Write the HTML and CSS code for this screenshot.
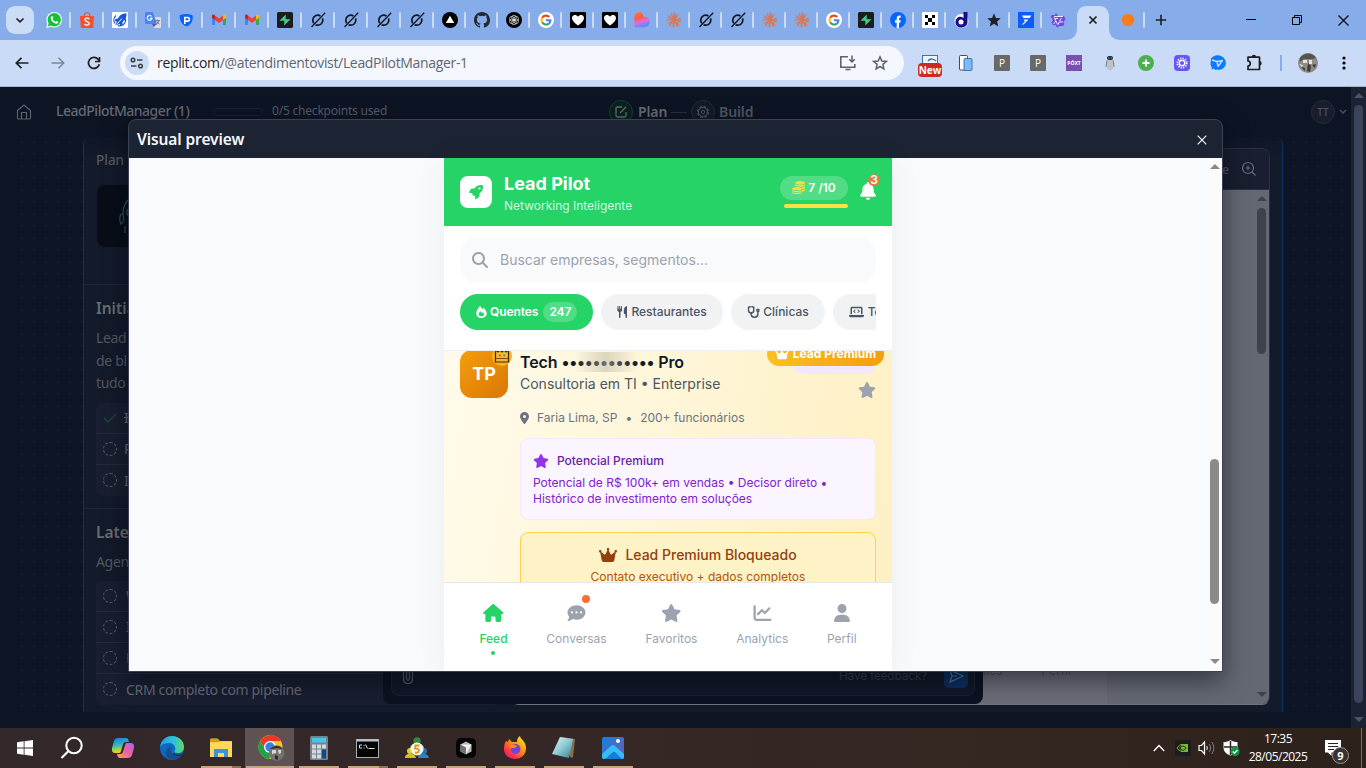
FILE: index.html
```
<!DOCTYPE html>
<html lang="pt-BR">
<head>
<meta charset="utf-8">
<title>LeadPilotManager</title>
<link rel="stylesheet" href="styles.css">
</head>
<body>
<svg class="defs" width="0" height="0" aria-hidden="true">
  <defs>
    <linearGradient id="gLove" x1="0" y1="0" x2="0.3" y2="1"><stop offset="0" stop-color="#ff7a18"/><stop offset=".45" stop-color="#ff5a4d"/><stop offset=".7" stop-color="#e46ad8"/><stop offset="1" stop-color="#5b8dff"/></linearGradient>
    <linearGradient id="gCop" x1="0" y1="0" x2="0.2" y2="1"><stop offset="0" stop-color="#1a7fe0"/><stop offset=".5" stop-color="#2bb5c9"/><stop offset=".75" stop-color="#8fd14a"/><stop offset="1" stop-color="#f7d21e"/></linearGradient>
    <linearGradient id="gCop2" x1="1" y1="0" x2="0" y2="1"><stop offset="0" stop-color="#a866ee"/><stop offset=".5" stop-color="#ee5fa0"/><stop offset="1" stop-color="#ffa24c"/></linearGradient>
    <linearGradient id="gEdge" x1="0" y1="0" x2="1" y2="0"><stop offset="0" stop-color="#1d9fe8"/><stop offset=".6" stop-color="#2fc3d8"/><stop offset="1" stop-color="#5fdc5a"/></linearGradient>
    <linearGradient id="gFire" x1="1" y1="0" x2="0.2" y2="1"><stop offset="0" stop-color="#fff04a"/><stop offset=".45" stop-color="#ff980e"/><stop offset=".8" stop-color="#ff3647"/><stop offset="1" stop-color="#e31587"/></linearGradient>
    <linearGradient id="gPhoto" x1="0" y1="0" x2="1" y2="1"><stop offset="0" stop-color="#1182dc"/><stop offset="1" stop-color="#7a57b8"/></linearGradient>
    <linearGradient id="gNote" x1="0" y1="0" x2="1" y2="1"><stop offset="0" stop-color="#e3f4f6"/><stop offset=".5" stop-color="#8fc9d4"/><stop offset="1" stop-color="#2d7f92"/></linearGradient>
  </defs>
  <symbol id="whats" viewBox="0 0 16 16"><circle cx="8.2" cy="7.8" r="7.8" fill="#fff"/><path d="M.2 16l1.4-5 3.6 3.7z" fill="#fff"/><circle cx="8.2" cy="7.8" r="6.7" fill="#16c13a"/><path d="M1.7 14.5l1-3.4 2.4 2.4z" fill="#16c13a"/><path d="M5.6 4.2c.6-.4 1 0 1.7 1.9 0 .4-.6.8-.6 1.100.6 1.200 1.500 2 2.700 2.500.4 0 .8-.9 1.200-.8 1.900.8 2 1 1.500 2-1.100 1.300-3.300.8-5-.700C5 8.300 3.900 5.700 5.600 4.200z" fill="#fff"/></symbol>
  <symbol id="shopee" viewBox="0 0 16 16"><path d="M1 4h14l-.8 12H1.800z" fill="#f1512f"/><path d="M5 4.500c0-5 6-5 6 0" fill="none" stroke="#f1512f" stroke-width="1.200"/><path d="M10.300 7C8.500 5.400 5.800 6.200 6 7.800c.2 1.900 4.400 1.600 4.300 3.700-.2 1.900-3 2.200-4.800.6" fill="none" stroke="#fff" stroke-width="1.300"/></symbol>
  <symbol id="rktab" viewBox="0 0 16 16"><rect width="16" height="16" rx="1" fill="#fff"/><path d="M4 3.500A6 6 0 0 0 3 11.500M6 13.700a6 6 0 0 0 7.500-7" fill="none" stroke="#1656d8" stroke-width="1.200"/><path d="M14.500 1.500c-5 0-7 2-8.500 5l-2.500.5L2.800 9l2 .5-1.500 4 4.500-1.500.5 1.500 2-1 .5-3c3-2 3.700-4 3.700-8z" fill="#1656d8"/><path d="M4.500 12.500L10 6.500" stroke="#fff"/></symbol>
  <symbol id="gtrans" viewBox="0 0 16 16"><path d="M6 5h9a1 1 0 0 1 1 1v9a1 1 0 0 1-1 1H9z" fill="#dadce0"/><path d="M1 0h7l4 12H1a1 1 0 0 1-1-1V1a1 1 0 0 1 1-1z" fill="#4a86ee"/><path d="M7 12h4.500L9 15z" fill="#6246b5"/><path d="M6.500 4.300a2.400 2.400 0 1 0 .5 2.100H5" fill="none" stroke="#fff" stroke-width="1.100"/><path d="M10.500 8.500h4.500M12.800 7.500v1M14 8.500c-.4 2-1.500 3.300-3 4M11.600 9c.6 1.500 1.600 2.500 2.900 3.200" fill="none" stroke="#6f7a86" stroke-width=".9"/></symbol>
  <symbol id="pshield" viewBox="0 0 16 16"><path d="M1.500 3.500C5 1.500 11 1.500 14.700 3.500c.6 5-1.500 9-6 11C4 13 1.800 9 1.500 3.500z" fill="#0b63f6"/><path d="M6.800 12V5.500h2.700c2.600 0 2.600 3.600 0 3.600H7" fill="none" stroke="#fff" stroke-width="1.600"/></symbol>
  <symbol id="gmail" viewBox="0 0 16 16"><path d="M1 4.500V13h3V7z" fill="#4285f4"/><path d="M15 4.500V13h-3V7z" fill="#34a853"/><path d="M4 3.500V8l4 3 4-3V3.500l-4 3z" fill="#ea4335"/><path d="M1 4c0-1.500 1.500-2 3-.5V8L1 5.700z" fill="#c5221f"/><path d="M15 4c0-1.500-1.500-2-3-.5V8l3-2.300z" fill="#fbbc04"/></symbol>
  <symbol id="supa" viewBox="0 0 16 16"><rect width="16" height="16" rx="1.500" fill="#1c1c1c"/><path d="M8.700 2.500v4.700h4.800L7.300 13.500V8.800H2.500z" fill="#3ecf8e"/></symbol>
  <symbol id="grok" viewBox="0 0 16 16"><circle cx="7.800" cy="8.200" r="5" fill="none" stroke="#10151f" stroke-width="1.700" stroke-dasharray="13 2.200 13.500 3" stroke-dashoffset="3"/><path d="M1.500 15L15.200.8" stroke="#10151f" stroke-width="1.300"/></symbol>
  <symbol id="vercel" viewBox="0 0 16 16"><circle cx="8" cy="8" r="8"/><path d="M8 3.800l4.200 7.200H3.800z" fill="#fff"/></symbol>
  <symbol id="github" viewBox="0 0 16 16"><path fill="#24292f" d="M8 0C3.580 0 0 3.580 0 8c0 3.540 2.290 6.530 5.470 7.590.4.070.55-.17.55-.38 0-.19-.01-.82-.01-1.490-2.010.37-2.530-.49-2.690-.94-.09-.23-.48-.94-.82-1.130-.28-.15-.68-.52-.01-.53.63-.01 1.080.58 1.230.82.72 1.210 1.870.87 2.330.66.07-.52.28-.87.51-1.070-1.780-.2-3.640-.89-3.640-3.950 0-.87.31-1.590.82-2.150-.08-.2-.36-1.020.08-2.120 0 0 .67-.21 2.200.82a7.600 7.600 0 0 1 4 0c1.530-1.040 2.200-.82 2.200-.82.44 1.100.16 1.920.08 2.120.51.56.82 1.270.82 2.150 0 3.070-1.870 3.750-3.650 3.950.29.25.54.73.54 1.480 0 1.070-.01 1.930-.01 2.200 0 .21.15.46.55.38A8 8 0 0 0 16 8c0-4.420-3.580-8-8-8z"/></symbol>
  <symbol id="gpt" viewBox="0 0 16 16"><circle cx="8" cy="8" r="8"/><g fill="none" stroke="#e8e8e8" stroke-width=".7"><circle cx="8" cy="5.500" r="2.300"/><circle cx="10.200" cy="6.700" r="2.300"/><circle cx="10.200" cy="9.300" r="2.300"/><circle cx="8" cy="10.500" r="2.300"/><circle cx="5.800" cy="9.300" r="2.300"/><circle cx="5.800" cy="6.700" r="2.300"/></g></symbol>
  <symbol id="google" viewBox="0 0 16 16"><circle cx="8" cy="8" r="8" fill="#fff"/><g fill="none" stroke-width="2.100"><path d="M4.200 5.800A4.400 4.400 0 0 1 11.200 5" stroke="#ea4335"/><path d="M4.200 5.700a4.400 4.400 0 0 0 0 4.600" stroke="#fbbc05"/><path d="M4.200 10.200a4.400 4.400 0 0 0 6.600 1.400" stroke="#34a853"/><path d="M8 8.200h4.400a4.400 4.400 0 0 1-1.600 3.400" stroke="#4285f4"/></g></symbol>
  <symbol id="heart" viewBox="0 0 16 16"><rect width="16" height="16" rx="1"/><path d="M8 13.500C4 10.500 2 8.500 2 6c0-3.500 4.300-4 6-1.300 1.700-2.700 6-2.200 6 1.300 0 2.500-2 4.500-6 7.500z" fill="#fff"/></symbol>
  <symbol id="lovable" viewBox="0 0 16 16"><path d="M.5 5C.5-1.500 9.500-1.500 9.500 5c0 0 6-.5 6.300 4.700.2 3.300-2.300 5.500-6 5.500H.5z" fill="url(#gLove)"/></symbol>
  <symbol id="claude" viewBox="0 0 16 16"><g stroke="#d97757" stroke-width="1.200"><path d="M8 .5v15M.5 8h15M2.500 3.500L13 13M12.500 2.500L3.500 13.500M5 1.500l6.500 13M11.300 12l1.500 2M10 1L7 14.500M1.500 5.500L14.500 10M14.800 6L1.500 11.500"/></g></symbol>
  <symbol id="fb" viewBox="0 0 16 16"><circle cx="8" cy="8" r="8" fill="#0866ff"/><path d="M6.700 16v-5.300H5V8.300h1.700V7c0-2.700 1.300-3.800 4-3.400v2.100c-1.300-.1-1.700.2-1.700 1.300v1.300h1.700l-.4 2.400H9V16z" fill="#fff"/></symbol>
  <symbol id="xbox" viewBox="0 0 16 16"><rect width="16" height="16" rx="1" fill="#fff"/><path d="M3 3h3v3H3zM10 3h3v3h-3zM6 6h4v4H6zM3 10h3v3H3zM10 10h3v3h-3z"/></symbol>
  <symbol id="dtab" viewBox="0 0 16 16"><circle cx="7.500" cy="9" r="7" fill="#fff"/><path d="M9.500 0h4v10c0 7-12 7.500-12 .5C1.500 5 6.500 3.500 9.500 6z" fill="#1b0d86"/><circle cx="7" cy="10" r="2.500" fill="#fff"/></symbol>
  <symbol id="starblk" viewBox="0 0 16 16"><path fill="#202124" d="M8 1.300l1.900 4.600 4.900.4-3.700 3.200 1.100 4.900L8 11.800l-4.200 2.600 1.100-4.900L1.200 6.300l4.900-.4z"/></symbol>
  <symbol id="fblue" viewBox="0 0 16 16"><rect width="16" height="16" fill="#0a5cff"/><path d="M4 3.500h9.500l-2 2.500H5.500zM5.500 7.500h5l-5 5H3.800L7 9.500z" fill="#fff"/></symbol>
  <symbol id="qwen" viewBox="0 0 16 16"><path d="M6 1l2 3h6l1.500 3-2 3 1 2-1.500 2H9L7.500 16l-2-3H3L1.500 10.500 3 8 .5 4.500 2 3h3z" fill="#6d4ae6"/><path d="M4 4.500h9M11.500 6L8 12.500M4 5.500L8 13M6 9L3.500 12M8 6.500h-3M10 10h3" stroke="#eee6ff" stroke-width="1"/></symbol>
  <symbol id="sunset" viewBox="0 0 16 16"><circle cx="8" cy="8" r="6.200" fill="#f97c1c"/><path d="M2 9.500h12M3 11.500h10M4.500 13.300h7" stroke="#c98a62" stroke-width=".7"/></symbol>

  <symbol id="fa-star" viewBox="0 0 576 512"><path d="M316.900 18C311.600 7 300.400 0 288.100 0s-23.400 7-28.800 18L195 150.300 51.400 171.500c-12 1.800-22 10.200-25.700 21.700s-.7 24.200 7.900 32.700L137.800 329 113.200 474.700c-2 12 3 24.200 12.900 31.300s23 8 33.800 2.300l128.300-68.500 128.300 68.500c10.800 5.700 23.900 4.900 33.800-2.300s14.900-19.300 12.900-31.300L438.500 329 542.700 225.900c8.600-8.500 11.700-21.200 7.900-32.700s-13.700-19.900-25.700-21.700L381.200 150.300 316.900 18z"/></symbol>
  <symbol id="fa-search" viewBox="0 0 512 512"><path d="M416 208c0 45.900-14.900 88.300-40 122.700L502.600 457.400c12.500 12.500 12.500 32.800 0 45.300s-32.800 12.500-45.300 0L330.700 376c-34.400 25.200-76.800 40-122.700 40C93.100 416 0 322.900 0 208S93.100 0 208 0S416 93.100 416 208zM208 352a144 144 0 1 0 0-288 144 144 0 1 0 0 288z"/></symbol>
  <symbol id="fa-user" viewBox="0 0 448 512"><path d="M224 256A128 128 0 1 0 224 0a128 128 0 1 0 0 256zm-45.700 48C79.800 304 0 383.800 0 482.300C0 498.700 13.300 512 29.700 512H418.300c16.400 0 29.700-13.300 29.700-29.700C448 383.800 368.200 304 269.700 304H178.300z"/></symbol>
  <symbol id="fa-bell" viewBox="0 0 448 512"><path d="M224 0c-17.700 0-32 14.300-32 32V51.200C119 66 64 130.600 64 208v18.800c0 47-17.300 92.400-48.500 127.600l-7.400 8.300c-8.400 9.400-10.400 22.900-5.300 34.400S19.400 416 32 416H416c12.600 0 24-7.400 29.200-18.900s3.100-25-5.300-34.400l-7.400-8.300C401.300 319.200 384 273.900 384 226.800V208c0-77.400-55-142-128-156.800V32c0-17.700-14.300-32-32-32zm45.300 493.300c12-12 18.700-28.300 18.700-45.300H224 160c0 17 6.700 33.300 18.700 45.300s28.300 18.700 45.300 18.700s33.300-6.700 45.300-18.700z"/></symbol>
  <symbol id="fa-chart" viewBox="0 0 512 512"><path d="M64 64c0-17.700-14.300-32-32-32S0 46.300 0 64V400c0 44.200 35.800 80 80 80H480c17.700 0 32-14.300 32-32s-14.300-32-32-32H80c-8.800 0-16-7.200-16-16V64zm406.600 86.600c12.500-12.500 12.500-32.800 0-45.300s-32.800-12.500-45.300 0L320 210.700l-57.400-57.400c-12.500-12.500-32.800-12.500-45.300 0l-112 112c-12.500 12.500-12.500 32.800 0 45.300s32.800 12.500 45.300 0L240 221.300l57.400 57.400c12.500 12.500 32.800 12.500 45.300 0l128-128z"/></symbol>
  <symbol id="fa-pin" viewBox="0 0 384 512"><path d="M215.700 499.200C267 435 384 279.400 384 192C384 86 298 0 192 0S0 86 0 192c0 87.400 117 243 168.300 307.200c12.300 15.300 35.100 15.300 47.400 0zM192 128a64 64 0 1 1 0 128 64 64 0 1 1 0-128z"/></symbol>
  <symbol id="fa-crown" viewBox="0 0 576 512"><path d="M309 106c11.400-7 19-19.700 19-34c0-22.100-17.900-40-40-40s-40 17.900-40 40c0 14.400 7.600 27 19 34L209.700 220.600c-9.100 18.200-32.700 23.400-48.600 10.700L72 160c5-6.700 8-15 8-24c0-22.100-17.900-40-40-40S0 113.900 0 136s17.900 40 40 40c.2 0 .5 0 .7 0L86.400 427.400c5.500 30.400 32 52.600 63 52.600H426.600c30.900 0 57.400-22.100 63-52.600L535.300 176c.2 0 .5 0 .7 0c22.100 0 40-17.900 40-40s-17.900-40-40-40s-40 17.900-40 40c0 9 3 17.300 8 24l-89.100 71.300c-15.900 12.700-39.500 7.500-48.600-10.700L309 106z"/></symbol>
  <symbol id="fa-home" viewBox="0 0 576 512"><path d="M575.800 255.500c0 18-15 32.100-32 32.100h-32l.7 160.200c0 2.700-.2 5.400-.5 8.100V472c0 22.100-17.900 40-40 40H456c-1.100 0-2.200 0-3.300-.1c-1.400 .1-2.800 .1-4.200 .1H416 392c-22.100 0-40-17.900-40-40V448 384c0-17.700-14.300-32-32-32H256c-17.700 0-32 14.300-32 32v64 24c0 22.100-17.900 40-40 40H160 128.100c-1.500 0-3-.1-4.500-.2c-1.200 .1-2.400 .2-3.600 .2H104c-22.100 0-40-17.900-40-40V360c0-.9 0-1.900 .1-2.800V287.600H32c-18 0-32-14-32-32.100c0-9 3-17 10-24L266.400 8c7-7 15-8 22-8s15 2 21 7L564.800 231.500c8 7 12 15 11 24z"/></symbol>
  <symbol id="fa-chat" viewBox="0 0 512 512"><path d="M256 448c141.400 0 256-93.100 256-208S397.400 32 256 32S0 125.100 0 240c0 45.100 17.700 86.800 47.700 120.900c-1.900 24.500-11.400 46.300-21.400 62.900c-5.500 9.200-11.100 16.600-15.200 21.600c-2.100 2.500-3.700 4.400-4.900 5.700c-.6 .6-1 1.100-1.300 1.400l-.3 .3c-4.600 4.600-5.900 11.400-3.400 17.400c2.500 6 8.300 9.900 14.800 9.900c28.700 0 57.600-8.900 81.600-19.300c22.900-10 42.400-21.900 54.300-30.600c31.800 11.500 67 17.900 104.100 17.900zM128 208a32 32 0 1 1 0 64 32 32 0 1 1 0-64zm128 0a32 32 0 1 1 0 64 32 32 0 1 1 0-64zm96 32a32 32 0 1 1 64 0 32 32 0 1 1 -64 0z"/></symbol>
  <symbol id="fa-rocket" viewBox="0 0 512 512"><path d="M156.600 384.900L125.700 354c-8.500-8.500-11.500-20.800-7.700-32.200c3-8.900 7-20.500 11.800-33.800L24 288c-8.600 0-16.600-4.600-20.900-12.100s-4.200-16.700 .2-24.100l52.500-88.500c13-21.900 36.500-35.300 61.900-35.300l82.300 0c2.400-4 4.800-7.700 7.200-11.300C289.100-4.100 411.100-8.100 483.900 5.300c11.600 2.100 20.600 11.200 22.800 22.800c13.400 72.900 9.300 194.800-111.400 276.700c-3.500 2.400-7.300 4.800-11.300 7.200v82.300c0 25.400-13.400 49-35.300 61.900l-88.500 52.500c-7.400 4.400-16.600 4.500-24.100 .2s-12.100-12.200-12.100-20.900V380.800c-14.100 4.900-26.400 8.900-35.700 11.900c-11.200 3.600-23.400 .5-31.800-7.800zM384 168a40 40 0 1 0 0-80 40 40 0 1 0 0 80z"/></symbol>
  <symbol id="fa-coins" viewBox="0 0 512 512"><path d="M320 0c106 0 192 28 192 72s-86 72-192 72-192-28-192-72S214 0 320 0zM128 122c66 62 318 62 384 0v34c0 56-120 76-200 72-52-14-110-22-184-20zM370 268c60-6 110-20 142-48v36c0 38-50 60-134 66zM384 364c50-6 96-20 128-46v36c0 34-50 56-128 64z"/><path d="M192 240c106 0 192 28 192 64s-86 64-192 64S0 340 0 304s86-64 192-64zM0 350c66 56 318 56 384 0v32c0 84-384 84-384 0zM0 432c66 56 318 56 384 0v18c0 82-384 82-384 0z"/></symbol>
  <symbol id="fa-fire" viewBox="0 0 448 512"><path fill-rule="evenodd" d="M160 4c54 50 86 94 106 130l36-50c16-16 28 0 34 8 56 74 112 150 112 220 0 116-94 200-224 200S0 426 0 306C0 200 90 76 160 4zm64 436c64 0 104-40 104-88 0-40-24-72-40-96l-44 48c-24-36-50-66-66-84-44 52-74 88-74 132 0 54 50 88 120 88z"/></symbol>
  <symbol id="fa-utensils" viewBox="0 0 448 512"><path d="M16 0h34l8 140h20L86 0h36l8 140h20L158 0h34l16 150c2 60-30 88-70 98v234c0 40-64 40-64 0V248C34 238-2 210 0 150zM416 0c-80 10-136 90-136 176v112c0 36 28 64 64 64h8v128c0 40 64 40 64 0z"/></symbol>
  <symbol id="fa-steth" viewBox="0 0 576 512"><g fill="none" stroke="currentColor" stroke-width="62" stroke-linecap="round"><path d="M142 32L64 52v124c0 150 224 150 224 0V52l-78-20"/><path d="M176 296v60c0 164 288 164 288 0V240"/><circle cx="464" cy="184" r="48"/></g></symbol>
  <symbol id="fa-laptop" viewBox="0 0 640 512"><path fill-rule="evenodd" d="M64 96c0-36 28-64 64-64h384c36 0 64 28 64 64v256h-64V96H128v256H64zM0 384h640v20c0 42-34 76-76 76H76c-42 0-76-34-76-76z"/><path d="M270 160l-66 64 66 64M370 160l66 64-66 64" fill="none" stroke="currentColor" stroke-width="44"/></symbol>
</svg>

<div class="screen">
  <header class="tabstrip">
    <button class="tabmenu"><svg width="12" height="12" viewBox="0 0 12 12"><path d="M2.500 4.500L6 7.800l3.500-3.300" fill="none" stroke="#1f1f1f" stroke-width="1.700"/></svg></button>
    <div class="tabs">
      <span class="tab wide"><svg><use href="#whats"/></svg></span>
      <span class="tab wide"><svg><use href="#shopee"/></svg></span>
      <span class="tab wide"><svg><use href="#rktab"/></svg></span>
      <span class="tab wide"><svg><use href="#gtrans"/></svg></span>
      <span class="tab wide"><svg><use href="#pshield"/></svg></span>
      <span class="tab wide"><svg><use href="#gmail"/></svg></span>
      <span class="tab wide"><svg><use href="#gmail"/></svg></span>
      <span class="tab wide"><svg><use href="#supa"/></svg></span>
      <span class="tab wide"><svg><use href="#grok"/></svg></span>
      <span class="tab wide"><svg><use href="#grok"/></svg></span>
      <span class="tab wide"><svg><use href="#grok"/></svg></span>
      <span class="tab wide"><svg><use href="#grok"/></svg></span>
      <span class="tab"><svg><use href="#vercel"/></svg></span>
      <span class="tab"><svg><use href="#github"/></svg></span>
      <span class="tab"><svg><use href="#gpt"/></svg></span>
      <span class="tab"><svg><use href="#google"/></svg></span>
      <span class="tab"><svg><use href="#heart"/></svg></span>
      <span class="tab"><svg><use href="#heart"/></svg></span>
      <span class="tab"><svg><use href="#lovable"/></svg></span>
      <span class="tab"><svg><use href="#claude"/></svg></span>
      <span class="tab"><svg><use href="#grok"/></svg></span>
      <span class="tab"><svg><use href="#grok"/></svg></span>
      <span class="tab"><svg><use href="#claude"/></svg></span>
      <span class="tab"><svg><use href="#claude"/></svg></span>
      <span class="tab"><svg><use href="#google"/></svg></span>
      <span class="tab"><svg><use href="#supa"/></svg></span>
      <span class="tab"><svg><use href="#fb"/></svg></span>
      <span class="tab"><svg><use href="#xbox"/></svg></span>
      <span class="tab"><svg><use href="#dtab"/></svg></span>
      <span class="tab"><svg><use href="#starblk"/></svg></span>
      <span class="tab"><svg><use href="#fblue"/></svg></span>
      <span class="tab last"><svg><use href="#qwen"/></svg></span>
      <svg class="activetab" width="56" height="34" viewBox="0 0 56 34"><path d="M0 34c8 0 12-4 12-12V10C12 4 16 0 22 0h12c6 0 10 4 10 10v12c0 8 4 12 12 12z" fill="#c9dbf6"/><path d="M24.500 10.500l7 7M31.500 10.500l-7 7" stroke="#1f1f1f" stroke-width="1.700"/></svg>
      <span class="tab after"><svg><use href="#sunset"/></svg></span>
      <svg class="plus" width="12" height="12" viewBox="0 0 12 12"><path d="M6 .8v10.400M.8 6h10.400" stroke="#1f1f1f" stroke-width="1.600"/></svg>
    </div>
    <div class="winbtns">
      <svg width="10" height="10"><path d="M0 4.500h10" stroke="#000"/></svg>
      <svg width="10" height="10"><path d="M.5 2.500h7v7h-7zM2.500 2.500v-2h7v7h-2" fill="none" stroke="#000"/></svg>
      <svg width="11" height="11"><path d="M.5.5l10 10M10.500.5l-10 10" stroke="#000" stroke-width="1.100"/></svg>
    </div>
  </header>

  <div class="toolbar">
    <svg class="nav1" width="14" height="12" viewBox="0 0 14 12"><path d="M13.500 6H1.500M6.500.8L1.300 6l5.200 5.200" fill="none" stroke="#1f1f1f" stroke-width="1.700"/></svg>
    <svg class="nav2" width="14" height="12" viewBox="0 0 14 12"><path d="M.5 6h12M7.500.8L12.700 6l-5.200 5.200" fill="none" stroke="#7c8798" stroke-width="1.600"/></svg>
    <svg class="nav3" width="14" height="14" viewBox="0 0 14 14"><path d="M12.300 8.200A5.500 5.500 0 1 1 11 3.200L12.600 5" fill="none" stroke="#1f1f1f" stroke-width="1.700"/><path d="M12.500 1v4.500H8" fill="none" stroke="#1f1f1f" stroke-width="1.700"/></svg>
    <div class="address">
      <span class="siteinfo"><svg width="14" height="12" viewBox="0 0 14 12"><g fill="none" stroke="#3c4043" stroke-width="1.500"><circle cx="3" cy="3" r="1.800"/><path d="M7 3h5.500"/><circle cx="10.500" cy="9" r="1.800"/><path d="M1 9h5.500"/></g></svg></span>
      <span class="url">replit.com<span class="path">/@atendimentovist/LeadPilotManager-1</span></span>
      <svg class="install" width="18" height="16" viewBox="0 0 18 16"><path d="M9 1.800H1.800v10.400h14V9M6.500 14.500h5" fill="none" stroke="#5f6368" stroke-width="1.600"/><path d="M13 .5v6M10.300 4.200L13 7l2.700-2.800" fill="none" stroke="#5f6368" stroke-width="1.500"/></svg>
      <svg width="16" height="16" viewBox="0 0 16 16"><path d="M8 1.800l1.800 4.200 4.600.4-3.500 3 1 4.500L8 11.500l-3.900 2.400 1-4.500-3.500-3L6.200 6z" fill="none" stroke="#5f6368" stroke-width="1.500"/></svg>
    </div>
    <div class="exts">
      <span class="ext new"><svg viewBox="0 0 16 16"><rect x=".5" y=".5" width="15" height="13" fill="#eef5fa" stroke="#3479a8"/><path d="M6 6c2-3 6-2 8 0" stroke="#3479a8" fill="none" stroke-width="1.500"/></svg><b>New</b></span>
      <svg class="ext" viewBox="0 0 16 16"><rect x="1.500" y=".5" width="8" height="14.500" rx="1" fill="#fff" stroke="#3d4b5c"/><rect x="6" y="3.500" width="8" height="12" rx="1" fill="#7bbaff" stroke="#2f5f96" stroke-width=".8"/></svg>
      <span class="ext pbox">P</span>
      <span class="ext pbox">P</span>
      <span class="ext poxt">PÓXT</span>
      <svg class="ext" viewBox="0 0 16 16"><path d="M5.500 4h5l.8 6c0 4-1.500 5.500-3.300 5.500S4.700 14 4.700 10z" fill="#c0c2c6"/><path d="M4.800 5.500L4 12M11.200 5.500L12 12" stroke="#7b7e84" stroke-width="1"/><rect x="5" y="1" width="6" height="4" rx="2" fill="#222b3c"/><path d="M6 3h1.500M8.600 3h1.500" stroke="#39a0e5"/></svg>
      <svg class="ext" viewBox="0 0 16 16"><circle cx="8" cy="8" r="8" fill="#4caf50"/><path d="M8 4.500v7M4.500 8h7" stroke="#fff" stroke-width="1.800"/></svg>
      <svg class="ext" viewBox="0 0 16 16"><rect width="16" height="16" rx="4" fill="#6657f5"/><circle cx="8" cy="8" r="2.700" fill="none" stroke="#fff" stroke-width="1.200"/><circle cx="8" cy="8" r="4.600" fill="none" stroke="#fff" stroke-width="2" stroke-dasharray="1.200 1.210"/></svg>
      <svg class="ext" viewBox="0 0 16 16"><path d="M1 3.500C3 .5 8-1 12 1.500c5 3 5 9 1 12-2 1.500-4 1.500-6 1l-2 .5-1-1.500-2.500 1C2.500 12 .5 11 .5 9z" fill="#0b7bff"/><path d="M2 5l5 1.500 1 5M8 11.500L12 6M7 6.500L13 5.500" fill="none" stroke="#cadcf7" stroke-width="1.400"/></svg>
      <svg class="ext" viewBox="0 0 16 16"><path d="M2 2.200h11.500v12.300H2v-3.300c3 0 3-5.200 0-5.200z" fill="none" stroke="#1f1f1f" stroke-width="1.700" stroke-linejoin="round"/><path d="M5.700 2a2.200 2.200 0 0 1 4.400 0zM13.500 6a2.200 2.200 0 0 1 0 4.400z" fill="#1f1f1f"/></svg>
    </div>
    <span class="tbsep"></span>
    <svg class="profile" viewBox="0 0 20 20"><circle cx="10" cy="10" r="10" fill="#8c8b85"/><path d="M2 5c4-6 13-6 16 0l-3 1H6L1.500 9z" fill="#57544f"/><path d="M5 7h4v3H5zM11 7h3v4h-3zM1 11l4 1-1 2z" fill="#e3e2de"/><path d="M10 10l3 3-1 6-3-1zM3 14l4 1v3zM14 12l4-1-1 4z" fill="#403d39"/></svg>
    <svg class="kebab" width="4" height="14"><circle cx="2" cy="2" r="1.600"/><circle cx="2" cy="7" r="1.600"/><circle cx="2" cy="12" r="1.600"/></svg>
  </div>

  <main class="page">
    <div class="appcol">
      <div class="apphead">
        <svg class="house" width="16" height="16" viewBox="0 0 16 16"><path d="M1.500 6.500L8 1l6.500 5.500V14c0 .6-.4 1-1 1h-11c-.6 0-1-.4-1-1zM5.500 15V8.500h5V15" fill="none" stroke="#5a606c" stroke-width="1.200"/></svg>
        <span class="proj">LeadPilotManager (1)</span>
        <span class="meter"></span>
        <span class="checks">0/5 checkpoints used</span>
        <span class="step on"><i><svg width="14" height="14" viewBox="0 0 14 14"><path d="M8 2H3.500C2.500 2 2 2.500 2 3.500v7c0 1 .5 1.500 1.500 1.500h7c1 0 1.500-.5 1.500-1.500V7M6 8l6-6" fill="none" stroke="#5a7468" stroke-width="1.300"/></svg></i>Plan</span>
        <span class="dash"></span>
        <span class="step"><i><svg width="14" height="14" viewBox="0 0 14 14"><circle cx="7" cy="7" r="5.300" fill="none" stroke="#4b5160" stroke-width="1.500" stroke-dasharray="2.500 1.660"/><circle cx="7" cy="7" r="4.500" fill="none" stroke="#4b5160"/><circle cx="7" cy="7" r="1.700" fill="none" stroke="#4b5160"/></svg></i>Build</span>
        <span class="avatar">TT</span>
        <svg class="chev" width="8" height="6"><path d="M1 1l3 3 3-3" fill="none" stroke="#4d5361" stroke-width="1.300"/></svg>
      </div>
      <div class="board">
        <div class="panel">
          <section class="plan">
            <div class="planhead">
              <p class="ptitle">Plan</p>
              <div class="thumb"><svg width="14" height="36" viewBox="0 0 14 36"><path d="M9 1C4 6 3 15 5 21M4 14c-4 2-4 7-2 11l3-4M10 9c-3 2-3 7 1 9M6 27v7" fill="none" stroke="#1f5559" stroke-width="1.200"/></svg></div>
            </div>
            <div class="block">
              <h3>Initia</h3>
              <p class="para">Lead<br>de bl<br>tudo</p>
              <ul class="tasks">
                <li class="done"><svg width="14" height="10"><path d="M1 5l4 4 8-8" fill="none" stroke="#1e4a38" stroke-width="1.200"/></svg><s>I</s></li>
                <li><i></i>P</li>
                <li><i></i>I</li>
              </ul>
            </div>
            <div class="block later">
              <h3>Late</h3>
              <p class="para">Agen</p>
              <ul class="tasks wide">
                <li><i></i>W</li>
                <li><i></i>I</li>
                <li><i></i>P</li>
                <li><i></i>CRM completo com pipeline</li>
              </ul>
            </div>
          </section>
          <section class="frame">
            <div class="framehead"><span>e</span><svg width="16" height="16" viewBox="0 0 16 16"><circle cx="7" cy="7" r="5.500" fill="none" stroke="#686d7a" stroke-width="1.200"/><path d="M11 11l3.500 3.500M7 4.700v4.600M4.700 7h4.600" stroke="#686d7a" stroke-width="1.200"/></svg></div>
            <div class="framebody">
              <div class="ghost"><span>Analytics</span><span>Perfil</span></div>
              <div class="fscroll"><i class="up"></i><b></b><i class="down"></i></div>
            </div>
          </section>
        </div>
      </div>
      <div class="chat"><div class="chatbox"><svg width="12" height="18" viewBox="0 0 12 18"><path d="M1.500 3v9c0 6 9 6 9 0V3M4.500 3v8.500c0 2.300 3 2.300 3 0V3" fill="none" stroke="#565c69" stroke-width="1.200"/></svg><span>Have feedback?</span><b><svg width="15" height="14" viewBox="0 0 15 14"><path d="M1 1l13 6L1 13l2-6zM3 7h5" fill="none" stroke="#52729b" stroke-width="1.200"/></svg></b></div></div>
    </div>
    <div class="pagescroll"><i class="up"></i><b></b><i class="down"></i></div>

    <div class="modal">
      <div class="modalhead"><span>Visual preview</span><svg width="10" height="10"><path d="M.7.7l8.600 8.600M9.300.7L.7 9.300" stroke="#f5f9fc" stroke-width="1.200"/></svg></div>
      <div class="modalbody">
        <div class="stage">
          <div class="phone">
            <div class="phead">
              <span class="logo"><svg width="14" height="14"><use href="#fa-rocket"/></svg></span>
              <div class="brand"><strong>Lead Pilot</strong><span>Networking Inteligente</span></div>
              <div class="credits"><span class="pill"><svg width="13" height="13"><use href="#fa-coins"/></svg>7 /10</span><i></i></div>
              <span class="bell"><svg width="16" height="18"><use href="#fa-bell"/></svg><b>3</b></span>
            </div>
            <div class="finder">
              <div class="search"><svg width="16" height="16"><use href="#fa-search"/></svg><span>Buscar empresas, segmentos...</span></div>
              <div class="chips">
                <span class="chip active"><svg width="11" height="12"><use href="#fa-fire"/></svg>Quentes<b>247</b></span>
                <span class="chip"><svg width="11" height="12"><use href="#fa-utensils"/></svg>Restaurantes</span>
                <span class="chip"><svg width="13.500" height="12"><use href="#fa-steth"/></svg>Clínicas</span>
                <span class="chip tech"><svg width="15" height="12"><use href="#fa-laptop"/></svg>Te</span>
              </div>
            </div>
            <div class="feed">
              <div class="lead">
                <div class="ava">TP<span class="badge"><svg width="16" height="14" viewBox="0 0 16 14"><path d="M1.500 1l2.500 2 1.800-2L8 3l2.200-2L12 3l2.500-2v12h-13z" fill="#f2b632" stroke="#3a2a12" stroke-width="1.200"/><path d="M2 9.500h12" stroke="#7c4c12"/><path d="M5 6.500h1.500" stroke="#e6312c" stroke-width="1.500"/><path d="M9.500 6.500H11" stroke="#1f9b78" stroke-width="1.500"/></svg></span></div>
                <div class="info">
                  <div class="name">Tech <span class="mask">••••••••••••</span> Pro<em></em></div>
                  <div class="seg">Consultoria em TI • Enterprise</div>
                  <div class="loc"><svg width="9" height="12"><use href="#fa-pin"/></svg><span>Faria Lima, SP</span><span>•</span><span>200+ funcionários</span></div>
                  <div class="pot"><div class="pottitle"><svg width="16" height="14"><use href="#fa-star"/></svg>Potencial Premium</div><p>Potencial de R$ 100k+ em vendas • Decisor direto •<br>Histórico de investimento em soluções</p></div>
                  <div class="locked"><div><svg width="18" height="16"><use href="#fa-crown"/></svg>Lead Premium Bloqueado</div><p>Contato executivo + dados completos</p></div>
                </div>
                <span class="under"></span>
                <span class="premium"><svg width="14" height="12"><use href="#fa-crown"/></svg>Lead Premium</span>
                <svg class="fav" width="18" height="16"><use href="#fa-star"/></svg>
              </div>
            </div>
            <nav class="pnav">
              <span class="item on"><svg width="20.500" height="18"><use href="#fa-home"/></svg>Feed<i></i></span>
              <span class="item"><svg width="19" height="18"><use href="#fa-chat"/></svg>Conversas<b></b></span>
              <span class="item"><svg width="20.500" height="18"><use href="#fa-star"/></svg>Favoritos</span>
              <span class="item"><svg width="19" height="18"><use href="#fa-chart"/></svg>Analytics</span>
              <span class="item"><svg width="16" height="18"><use href="#fa-user"/></svg>Perfil</span>
            </nav>
          </div>
        </div>
        <div class="mscroll"><i class="up"></i><b></b><i class="down"></i></div>
      </div>
    </div>
  </main>

  <footer class="taskbar">
    <span class="app"><svg width="16" height="16"><path d="M0 2.300L6.700 1.300V7.600H0zM7.500 1.200L16 0v7.600H7.500zM0 8.400h6.700v6.300L0 13.700zM7.500 8.400H16V16l-8.500-1.200z" fill="#fff"/></svg></span>
    <span class="app find"><svg width="24" height="24"><circle cx="14" cy="9.500" r="7.700" fill="none" stroke="#fff" stroke-width="2"/><path d="M8.500 15L1.500 22" stroke="#fff" stroke-width="2.200"/></svg></span>
    <span class="app"><svg width="24" height="24" viewBox="0 0 24 24"><path d="M7 2h8c2 0 2.500 2 3 4h-3c-2 0-2.700 1-3.200 3L10 15c-.5 1.700-1.300 2-3 2H4c-3 0-3.500-3-2.700-6L3 5c.6-2 2-3 4-3z" fill="url(#gCop)"/><path d="M17 22H9c-2 0-2.500-2-3-4h3c2 0 2.700-1 3.200-3L14 9c.5-1.700 1.300-2 3-2h3c3 0 3.500 3 2.700 6L21 19c-.6 2-2 3-4 3z" fill="url(#gCop2)"/></svg></span>
    <span class="app"><svg width="24" height="24" viewBox="0 0 24 24"><circle cx="12" cy="12" r="12" fill="#0f68bf"/><path d="M0 11C1 4 6 0 12 0c7 0 12 5 12 11 0 4-3 6-6 6-3 0-4-1-3.500-2C17 12 14 7 9 7 5 7 1 9 0 11z" fill="url(#gEdge)"/><path d="M11 11c-2 3 1 8 6 8 2 0 4-.5 6-1.500-4 7-14 9-17 2-2-4 1-8 5-8.500z" fill="#134f93"/><path d="M14 17c2 2 6 2 9 0l-1 2c-3 2-7 1-9-1z" fill="#33282a"/></svg></span>
    <span class="app run split"><svg width="22" height="20"><path d="M0 2c0-1 .5-1.500 1.500-1.500h6L9.500 3H22v16H0z" fill="#f9c93a"/><path d="M0 4h22v15H0z" fill="#ffd95e"/><path d="M0 1h8.500l1 2-1 1.200H0z" fill="#e29b08"/><path d="M4 11h14v8h-4v-4H8v4H4z" fill="#3c92dc"/></svg></span>
    <span class="app run active"><svg width="26" height="26" viewBox="0 0 26 26"><circle cx="12.500" cy="12" r="12" fill="#fbc51b"/><path d="M2 6C7-2 19-2 23 6H12l-5 8z" fill="#e8392c"/><path d="M2 6l6 10h7l-4 8C1 22-2 13 2 6z" fill="#22a14b"/><circle cx="12" cy="12" r="6" fill="#fff"/><circle cx="12" cy="12" r="4.700" fill="#3a7de9"/><circle cx="18.500" cy="18" r="7.800" fill="#75736e"/><path d="M14 15h4v3l-4 1zM20 15h3v3l-2 1z" fill="#d9d7d2"/><path d="M12 14c4-4 9-4 13 0l-6-1zM17 20l3 1v4l-3-1z" fill="#302d2b"/></svg></span>
    <span class="app run"><svg width="18" height="24"><rect width="18" height="24" rx="1.500" fill="#77838e"/><rect x="2" y="2" width="14" height="4.500" fill="#3ec8f0"/><path d="M2 8.500h4v4H2zM7 8.500h4v4H7zM12 8.500h4v4h-4zM2 13.500h4v4H2zM7 13.500h4v4H7zM2 18.500h4v4H2zM7 18.500h4v4H7z" fill="#d3d9df"/><path d="M12 13.500h4v9h-4z" fill="#104a87"/></svg></span>
    <span class="app run split"><svg width="23" height="19"><rect x=".5" y=".5" width="22" height="18" fill="#050505" stroke="#a6b0b4"/><path d="M1 1.500h21" stroke="#b9c6cc" stroke-width="2"/><path d="M6 6H3.500v3H6M8 6v1M8 8.500v1M9.500 5.500l2 4M12.500 9.500h6" stroke="#ddd" fill="none"/></svg></span>
    <span class="app run"><svg width="24" height="24" viewBox="0 0 24 24"><circle cx="12" cy="5" r="3.700" fill="#2f8a3a"/><path d="M5 12c0-6 14-6 14 0z" fill="#4fa350"/><circle cx="5" cy="15" r="3" fill="#e3cf2c"/><circle cx="19" cy="15" r="3" fill="#2476b9"/><path d="M0 22c0-6 10-6 11 0z" fill="#d4c02b"/><path d="M13 22c0-6 10-6 11 0z" fill="#2b84cc"/><circle cx="12" cy="13" r="6.500" fill="#fbf7ee"/><path d="M14.500 9.500h-4l-.5 3c5-.5 5.500 5 0 4" fill="none" stroke="#dc961d" stroke-width="1.800"/></svg></span>
    <span class="app run"><svg width="20" height="20"><rect width="20" height="20" rx="5" fill="#050505"/><path d="M10 3.500l5.500 3v7l-5.500 3-5.500-3v-7z" fill="#b8b8b8"/><path d="M4.500 6.500H15.500L10 16z" fill="#efefef"/><path d="M4.500 6.500L10 9.500V16l-5.500-2.500z" fill="#707070"/></svg></span>
    <span class="app run"><svg width="24" height="24" viewBox="0 0 24 24"><path d="M3 5l2 1 1-3 3 3c1 0 3 0 5 0 0-3 1-5 3-6 0 3 6 5 6 12 0 7-5 11-11 11S1 19 1 13c0-3 .5-6 2-8z" fill="url(#gFire)"/><circle cx="12.500" cy="13" r="5" fill="#7542d9"/><path d="M7 9c3-2 5 0 7 1-2 3-5 1-7 3z" fill="#ff8a17"/></svg></span>
    <span class="app run"><svg width="24" height="22"><path d="M9 0l14 2-2 18-2 1z" fill="#8b6f4c"/><path d="M8 0l13 2-4 19L0 17z" fill="url(#gNote)"/></svg></span>
    <span class="app run"><svg width="22" height="22"><rect width="22" height="22" rx="2" fill="url(#gPhoto)"/><path d="M0 17L9.500 8.500c1-.8 2-.8 3 0L22 17v3c0 1-1 2-2 2H2c-1 0-2-1-2-2z" fill="#35bdf5"/><path d="M3 22l8-7c.7-.5 1.300-.5 2 0l7 7z" fill="#1380cf"/><circle cx="16" cy="4" r="2" fill="#fff"/></svg></span>
    <div class="tray">
      <svg width="12" height="8"><path d="M.8 7L6 1.500 11.200 7" fill="none" stroke="#fff" stroke-width="1.400"/></svg>
      <svg class="nv" width="16" height="16"><rect width="16" height="16" fill="#1a1d1c"/><path d="M6 4h7v8H6z" fill="#76b82f"/><path d="M2 8c3-5 7-4 9.500 0-3 4-7 4-9.500 0zm2.500 0c1.500-2.500 3-2 4.500 0-1.500 2-3 2-4.500 0z" fill="none" stroke="#76b82f"/><path d="M5 8c2-3 4-2 6 0-2 3-4 3-6 0z" fill="none" stroke="#1a1d1c"/></svg>
      <svg class="snd" width="17" height="14"><path d="M1 4.500h2.500L6.500 1v12L3.500 9.500H1z" fill="none" stroke="#fff" stroke-width="1.200"/><path d="M8.500 5c1 1 1 3 0 4" fill="none" stroke="#fff"/><path d="M11 3c2 2 2 6 0 8M13.500 1c3 3 3 9 0 12" fill="none" stroke="#8b8180"/></svg>
      <svg class="shield" width="17" height="16"><path d="M7.500 0c2 1.500 4.500 2 7 2v5c0 5-3 7-7 8.500C3.500 14 .5 12 .5 7V2c2.500 0 5-.5 7-2z" fill="#fff"/><path d="M7.500 1v14M1 7h13" stroke="#30241f" stroke-width="1.500"/><circle cx="12" cy="11.500" r="4.500" fill="#13954a"/><path d="M9.800 11.500l1.700 1.700 3-3.200" fill="none" stroke="#fff" stroke-width="1.200"/></svg>
      <div class="clock"><span>17:35</span><span>28/05/2025</span></div>
      <span class="notif"><svg width="17" height="16"><path d="M0 0h16v12.500H6.500V16L3 12.500H0z" fill="#fff"/><path d="M3 3.500h10M3 6.500h10M3 9.500h6" stroke="#30241f" stroke-width="1.200"/></svg><b>9</b></span>
      <span class="desk"></span>
    </div>
  </footer>
</div>
</body>
</html>
```
FILE: styles.css
```
* { box-sizing: border-box; }
body { margin: 0; font-family: "Open Sans", "Noto Sans", sans-serif; }
h3, p, ul { margin: 0; padding: 0; list-style: none; }
svg { display: block; flex: none; overflow: visible; }
.defs { position: absolute; }
.screen { width: 1366px; height: 768px; display: flex; flex-direction: column; overflow: hidden; }

/* tab strip */
.tabstrip { height: 40px; background: #86ade9; display: flex; flex: none; }
.tabmenu { width: 28px; height: 28px; margin: 6px 4px 0 6px; padding: 8px; border: 0; border-radius: 9px; background: #cbdcf7; flex: none; }
.tabs { display: flex; align-items: center; flex: 1; height: 40px; }
.tab { width: 32px; height: 16px; display: flex; align-items: center; justify-content: space-between; padding-left: 8px; flex: none; }
.tab.wide { width: 33px; }
.tab svg { width: 16px; height: 16px; overflow: hidden; }
.tab::after { content: ""; width: 2px; height: 16px; background: #cbdcf6; border-radius: 1px; }
.tab.last { width: 23px; }
.tab.last::after { display: none; }
.tab.after { width: 33px; margin-left: -9px; }
.activetab { margin-top: 6px; }
.plus { margin-left: 10px; }
.winbtns { display: flex; gap: 36px; padding: 15px 17px 0 0; }

/* toolbar */
.toolbar { height: 47px; background: #c9dbf6; border-bottom: 1px solid #a5b6d0; display: flex; align-items: center; flex: none; padding-left: 15px; }
.nav2 { margin-left: 22px; }
.nav3 { margin-left: 22px; }
.address { width: 784px; height: 34px; margin-left: 19px; border-radius: 17px; background: #f4f7fd; display: flex; align-items: center; padding: 0 16px 0 5px; flex: none; }
.siteinfo { width: 24px; height: 24px; border-radius: 12px; background: #cadcf7; display: grid; place-items: center; }
.url { margin-left: 8px; padding-bottom: 1px; flex: 1; font-size: 14px; letter-spacing: -0.33px; color: #1f1f1f; }
.path { color: #5f6672; }
.install { margin-right: 15px; }
.exts { display: flex; gap: 20px; margin-left: 18px; }
.ext { width: 16px; height: 16px; flex: none; }
.new { position: relative; }
.new b { position: absolute; left: -4px; top: 8px; width: 24px; height: 14px; border-radius: 4px; background: #cc2a22; color: #fff; font-size: 10px; line-height: 14px; text-align: center; }
.pbox { background: #696969; color: #fff; font-size: 10px; line-height: 16px; text-align: center; border-radius: 1px; }
.poxt { background: #7b4fb0; color: #fff; font: 700 5px/16px "Open Sans", sans-serif; text-align: center; }
.tbsep { width: 2px; height: 16px; background: #86ade9; margin-left: 18px; }
.profile { width: 20px; height: 20px; margin-left: 16px; }
.kebab { margin-left: 24px; }

/* workspace */
.page { position: relative; height: 641px; display: flex; background: #0d1423; font-family: "Noto Sans", sans-serif; color: #656a75; overflow: hidden; flex: none; }
.appcol { position: relative; width: 1351px; }
.apphead { height: 50px; display: flex; align-items: center; padding-left: 16px; font-size: 14px; line-height: 18px; font-weight: 500; }
.proj, .checks { padding-bottom: 2px; }
.proj { margin-left: 24px; width: 134px; letter-spacing: -0.48px; white-space: nowrap; }
.meter { width: 50px; height: 8px; border: 1px solid #181f2e; border-radius: 4px; margin-left: 23px; }
.checks { margin-left: 9px; width: 116px; font-size: 12px; letter-spacing: -0.2px; white-space: nowrap; font-weight: 400; color: #555b67; }
.step { display: flex; align-items: center; gap: 5px; margin-left: 221px; font-weight: 600; width: 58px; letter-spacing: -0.1px; }
.step i { width: 24px; height: 24px; flex: none; border-radius: 12px; border: 1px solid #252c3b; background: #131a28; display: grid; place-items: center; }
.step.on i { border-color: #10462d; background: #0b2022; }
.dash { width: 16px; height: 1px; margin-left: 4px; background: #292f3c; }
.dash + .step { margin-left: 4px; color: #51565f; gap: 4px; }
.avatar { width: 24px; height: 24px; margin-left: 562px; border-radius: 12px; border: 1px solid #252c3f; background: #181e2f; font-size: 10px; line-height: 22px; text-align: center; color: #4d535f; }
.chev { margin-left: 4px; }
.board { height: 578px; margin-left: 16px; margin-right: 3px; background: radial-gradient(circle at 6px 6px, #131a29 1px, transparent 1.200px) 0 11px / 12px 12px; }
.panel { margin-left: 67px; width: 1200px; height: 575px; border: solid #0c3361; border-width: 0 1px; border-radius: 8px 8px 0 0; background: linear-gradient(#0f1625, #131a29 20px); display: flex; overflow: hidden; }
.plan { width: 427px; flex: none; font-size: 14px; }
.planhead { height: 148px; padding: 12px 12px 0; border-bottom: 1px solid #1f2635; }
.ptitle { line-height: 22px; font-weight: 500; color: #555a65; font-size: 13.500px; }
.thumb { margin: 14px 0 0 1px; width: 180px; height: 62px; border-radius: 8px; background: #080d18; padding: 14px 0 0 22px; }
.block { height: 224px; padding: 11px 12px 0; border-bottom: 1px solid #1f2635; }
.block h3 { font-size: 15.500px; line-height: 24px; font-weight: 600; color: #686d76; }
.para { margin-top: 7px; line-height: 22.500px; color: #535863; letter-spacing: -0.33px; }
.tasks { margin-top: 8px; background: #191f30; border-radius: 6px; }
.tasks li { height: 31px; display: flex; align-items: center; gap: 7px; padding-left: 7px; border-bottom: 1px solid #252b3a; letter-spacing: -0.34px; }
.tasks li:last-child { border: 0; }
.tasks i { width: 14px; height: 14px; border: 1px dashed #5b606b; border-radius: 7px; }
.later { border: 0; }
.later .tasks { margin-top: 7px; }
.wide li { gap: 9px; }
.frame { width: 759px; height: 557px; margin-top: 11px; border: 1px solid #293044; border-bottom-color: #71747e; border-radius: 8px; overflow: hidden; display: flex; flex-direction: column; }
.framehead { height: 40px; background: #191f30; display: flex; align-items: center; justify-content: flex-end; gap: 12px; padding-right: 12px; font-size: 12px; color: #565b68; flex: none; }
.framebody { flex: 1; display: flex; background: #646873; border-top: 1px solid #293044; }
.ghost { width: 595px; background: #6a6d78; display: flex; align-items: flex-end; justify-content: flex-end; gap: 39px; padding: 0 36px 24px 0; font: 12px/18px Inter, sans-serif; color: #4b4f5c; }
.fscroll { margin-left: auto; }

/* scrollbars */
.fscroll, .pagescroll, .mscroll { width: 15px; display: flex; flex-direction: column; align-items: center; }
.up, .down { border: 5px solid transparent; width: 0; height: 0; }
.up { border-top: 0; border-bottom-color: #8a8a8a; margin-top: 6px; }
.down { border-bottom: 0; border-top-color: #8a8a8a; margin-top: auto; margin-bottom: 7px; }
.fscroll .up { border-bottom-color: #3d414b; }
.fscroll .down { border-top-color: #3d414b; }
.fscroll b { width: 9px; height: 146px; margin-top: 7px; border-radius: 5px; background: #3e424c; }
.pagescroll { background: #1b2231; }
.pagescroll b { width: 9px; height: 598px; margin-top: 7px; border-radius: 5px; background: #3c445c; }
.pagescroll .up { border-bottom-color: #4a5370; }
.pagescroll .down { border-top-color: #4a5370; margin-bottom: 6px; }
.mscroll { background: #fbfbfc; }
.mscroll b { width: 9px; height: 145px; margin-top: 290px; border-radius: 5px; background: #8a8a8a; }

/* chat composer floats over both columns */
.chat { position: absolute; left: 383px; top: 560px; width: 600px; height: 57px; padding: 0 8px 8px; border-radius: 0 0 8px 8px; background: #0c1221; }
.chatbox { height: 49px; border: 1px solid #1b2231; border-radius: 0 0 8px 8px; background: #121828; display: flex; align-items: center; padding: 8px 6px 0 10px; }
.chatbox span { margin-left: auto; font: 12px Inter, sans-serif; letter-spacing: -0.25px; color: #363c48; }
.chatbox b { width: 24px; height: 24px; margin-left: 17px; border-radius: 5px; background: #0c2f5d; display: grid; place-items: center; }

/* modal */
.modal { position: absolute; left: 128px; top: 32px; width: 1095px; height: 553px; border: 1px solid #3a4258; border-radius: 8px 8px 0 0; background: #1c2333; overflow: hidden; box-shadow: 0 8px 24px rgba(2, 6, 16, .5); }
.modalhead { height: 38px; display: flex; align-items: center; justify-content: space-between; padding: 1px 15px 0 8px; color: #f5f9fc; font-size: 15.500px; font-weight: 600; letter-spacing: -0.1px; }
.modalhead span { padding-bottom: 2px; }
.modalbody { height: 513px; display: flex; background: #f9fafc; }
.stage { width: 1078px; display: flex; justify-content: center; }
.phone { width: 448px; background: #fff; box-shadow: 0 0 30px rgba(0, 0, 0, .06); font-family: Inter, sans-serif; display: flex; flex-direction: column; color: #111827; }
.phone svg { fill: currentColor; }
.phead { height: 68px; background: #25d366; display: flex; padding: 0 14px 0 16px; color: #fff; flex: none; }
.logo { width: 32px; height: 32px; margin-top: 18px; border-radius: 8px; background: #fff; color: #25d366; display: grid; place-items: center; }
.brand { margin: 12px 0 0 12px; flex: 1; }
.brand strong { display: block; font-size: 18px; line-height: 28px; font-weight: 700; }
.brand span { display: block; font-size: 12px; line-height: 16px; color: #d4f6e0; }
.credits { margin-top: 18px; width: 68px; }
.pill { height: 24px; padding-bottom: 1px; border-radius: 12px; background: #51dc85; display: flex; align-items: center; justify-content: center; gap: 3px; font-size: 12px; font-weight: 600; white-space: nowrap; }
.pill svg { color: #fcd93e; }
.credits i { display: block; width: 64px; height: 4px; margin: 4px 0 0 4px; border-radius: 2px; background: #fde047; }
.bell { position: relative; margin: 24px 0 0 12px; width: 18px; }
.bell b { position: absolute; right: -2px; top: -8px; width: 12px; height: 12px; border-radius: 6px; background: #dc7f46; color: #e6f6de; font-size: 12px; font-weight: 700; line-height: 12px; text-align: center; }
.finder { height: 125px; padding: 12px 16px 0; border-bottom: 1px solid #eef0f3; flex: none; }
.search { height: 44px; border-radius: 16px; background: #f9fafc; display: flex; align-items: center; gap: 12px; padding-left: 12px; font-size: 14px; color: #9ca3af; }
.search span { padding-bottom: 2px; }
.chips { display: flex; gap: 8px; margin-top: 12px; overflow: hidden; }
.chip { height: 36px; padding: 0 16px 1px; border-radius: 18px; background: #f1f2f4; color: #4b5563; display: flex; align-items: center; gap: 3px; font-size: 12px; font-weight: 500; white-space: nowrap; flex: none; }
.chip.active { background: #25d366; color: #fff; font-weight: 600; letter-spacing: -0.07px; }
.chip.tech { gap: 4px; }
.chip b { margin-left: 2px; padding: 0 6px; line-height: 20px; border-radius: 10px; background: #51dc85; font-weight: 600; }
.feed { height: 231px; overflow: hidden; flex: none; }
.lead { position: relative; height: 260px; padding: 0 16px; display: flex; gap: 12px; background: linear-gradient(100deg, #fffbeb, #fef0c3); }
.ava { position: relative; width: 48px; height: 48px; margin-top: -1px; border-radius: 12px; background: linear-gradient(135deg, #f59e0b, #d97706); color: #fff; font-size: 18px; font-weight: 700; line-height: 47px; text-align: center; flex: none; }
.badge { position: absolute; right: -4px; top: -4px; width: 20px; height: 20px; border-radius: 10px; background: #fbb01f; display: grid; place-items: center; }
.info { flex: 1; margin-top: -1px; }
.name { font-size: 16px; font-weight: 600; line-height: 24px; position: relative; white-space: nowrap; letter-spacing: -0.1px; }
.mask { letter-spacing: -0.32px; }
.name em { position: absolute; left: 54px; top: 2px; width: 64px; height: 20px; background: linear-gradient(90deg, transparent, rgba(190, 185, 165, .55), transparent); }
.seg { font-size: 14px; line-height: 20px; color: #4b5563; }
.loc { display: flex; align-items: center; gap: 8px; margin-top: 16px; font-size: 12px; line-height: 16px; color: #6b7280; }
.pot { height: 82px; margin-top: 12px; padding: 14px 12px; border: 1px solid #f3e8ff; border-radius: 8px; background: #faf5ff; font-size: 12px; line-height: 16px; color: #7e22ce; }
.pottitle { display: flex; gap: 8px; align-items: center; color: #6b21a8; font-weight: 500; margin-bottom: 6px; }
.pottitle svg { color: #9333ea; }
.locked { height: 100px; margin-top: 12px; padding-top: 12px; border: 1px solid #fcd34d; border-radius: 8px; background: #fef3c7; text-align: center; color: #92400e; }
.locked div { display: flex; justify-content: center; align-items: center; gap: 8px; font-size: 14px; line-height: 20px; font-weight: 500; }
.locked p { margin-top: 4px; font-size: 12px; line-height: 16px; color: #b45309; }
.under { position: absolute; right: 16px; top: 1px; width: 84px; height: 22px; border-radius: 11px; background: #f3e8ff; }
.premium { position: absolute; right: 8px; top: -9px; width: 117px; height: 24px; padding-bottom: 1px; border-radius: 12px; background: linear-gradient(90deg, #fbbf24, #f59e0b); color: #fff; font-size: 12px; font-weight: 700; display: flex; align-items: center; justify-content: center; gap: 4px; white-space: nowrap; }
.fav { position: absolute; right: 16px; top: 31px; color: #9ca3af; }
.pnav { flex: 1; border-top: 1px solid #e5e7eb; background: #fff; display: flex; justify-content: space-around; padding: 21px 16px 0; }
.item { position: relative; display: flex; flex-direction: column; align-items: center; gap: 9px; font-size: 12px; line-height: 16px; color: #9ca3af; }
.item.on { color: #25d366; font-weight: 500; }
.item i { position: absolute; top: 47px; width: 4px; height: 4px; border-radius: 2px; background: #25d366; }
.item b { position: absolute; top: -9px; right: 17px; width: 8px; height: 8px; border-radius: 4px; background: #ff6b35; }

/* taskbar */
.taskbar { height: 40px; background: linear-gradient(90deg, #33282a, #352722 70%, #2d211b); display: flex; color: #fff; flex: none; }
.app { width: 49px; height: 40px; display: grid; place-items: center; }
.find { padding-right: 3px; }
.run { background: linear-gradient(#cda37d, #cda37d) center bottom / 40px 2px no-repeat; }
.run.split { background: linear-gradient(90deg, #cda37d 31px, #8b7058 31px) center bottom / 40px 2px no-repeat; }
.run.active { background: linear-gradient(#cda37d, #cda37d) center bottom / 48px 2px no-repeat, #5e5253; padding-left: 2px; }
.tray { margin-left: auto; display: flex; align-items: center; }
.nv { margin-left: 10px; }
.snd { margin-left: 7px; }
.shield { margin-left: 8px; }
.clock { width: 60px; margin-left: 8px; font-size: 12px; line-height: 18px; letter-spacing: -0.5px; text-align: center; display: flex; flex-direction: column; white-space: nowrap; }
.notif { position: relative; margin-left: 17px; }
.notif b { position: absolute; left: 7px; top: 7px; width: 17px; height: 17px; border-radius: 9px; border: 1px solid #9a9190; background: #3a3230; font-size: 11px; line-height: 15px; text-align: center; }
.desk { width: 1px; height: 40px; margin: 0 4px 0 19px; background: #776c68; }
```
